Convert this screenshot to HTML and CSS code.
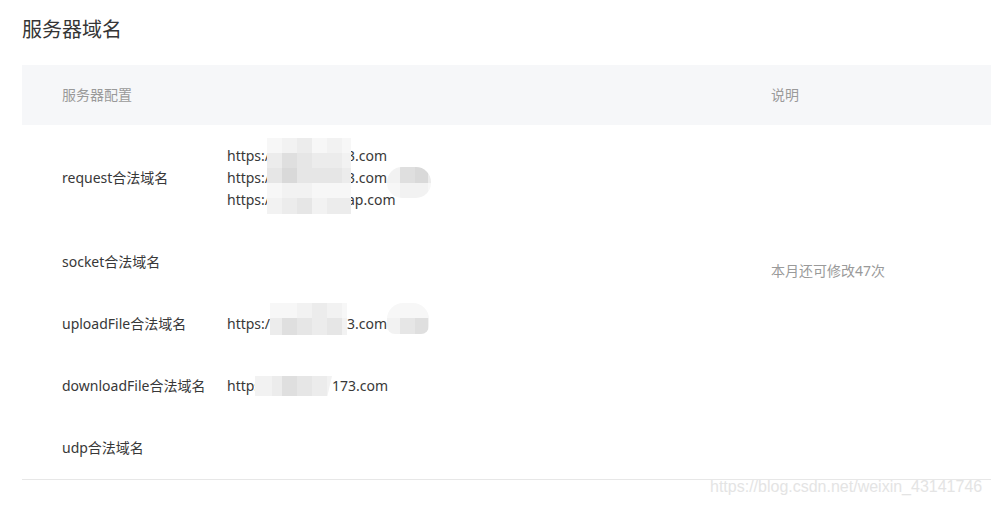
FILE: index.html
```html
<!DOCTYPE html>
<html lang="zh-CN">
<head>
<meta charset="utf-8">
<title>服务器域名</title>
<link rel="stylesheet" href="styles.css">
</head>
<body>
<div class="page">
  <h2 class="title">服务器域名</h2>
  <div class="table">
    <div class="thead">
      <div class="th th-main">服务器配置</div>
      <div class="th th-desc">说明</div>
    </div>
    <div class="tbody">
      <div class="cell label r1">request合法域名</div>
      <div class="cell urls r1">
        <div class="line"><span class="pre">https:/</span><span>3.com</span></div>
        <div class="line"><span class="pre">https:/</span><span>3.com</span></div>
        <div class="line"><span class="pre">https:/</span><span>ap.com</span></div>
        <div class="mosaic mz-req">
          <i class="a"></i><i class="b"></i><i class="c"></i><i class="a"></i><i class="b"></i><i class="a"></i>
          <i class="c"></i><i class="e"></i><i class="d"></i><i class="c"></i><i class="c"></i><i class="b"></i>
          <i class="d"></i><i class="f"></i><i class="d"></i><i class="d"></i><i class="d"></i><i class="c"></i>
          <i class="a"></i><i class="b"></i><i class="b"></i><i class="a"></i><i class="a"></i><i class="a"></i>
          <i class="b"></i><i class="c"></i><i class="d"></i><i class="b"></i><i class="c"></i><i class="c"></i>
        </div>
        <div class="mosaic mz-req-s">
          <i class="b"></i><i class="e"></i><i class="f"></i><i class="c"></i>
          <i class="a"></i><i class="b"></i><i class="b"></i><i class="a"></i>
        </div>
      </div>

      <div class="cell label r2">socket合法域名</div>
      <div class="cell urls r2"></div>

      <div class="cell label r3">uploadFile合法域名</div>
      <div class="cell urls r3">
        <div class="line"><span class="pre">https:/</span><span>3.com</span></div>
        <div class="mosaic mz-up">
          <i class="a"></i><i class="a"></i><i class="b"></i><i class="c"></i><i class="b"></i><i class="a"></i>
          <i class="c"></i><i class="e"></i><i class="d"></i><i class="c"></i><i class="d"></i><i class="b"></i>
        </div>
        <div class="mosaic mz-up-s">
          <i class="a"></i><i class="a"></i><i class="a"></i><i class="a"></i>
          <i class="b"></i><i class="d"></i><i class="e"></i><i class="b"></i>
        </div>
      </div>

      <div class="cell label r4">downloadFile合法域名</div>
      <div class="cell urls r4">
        <div class="line"><span class="pre pre-dl">https:/</span><span>173.com</span></div>
        <div class="mosaic mz-dl">
          <i class="b"></i><i class="c"></i><i class="e"></i><i class="d"></i><i class="c"></i><i class="b"></i>
        </div>
      </div>

      <div class="cell label r5">udp合法域名</div>
      <div class="cell urls r5"></div>

      <div class="cell desc">本月还可修改47次</div>
    </div>
  </div>
</div>
<div class="watermark">https://blog.csdn.net/weixin_43141746</div>
</body>
</html>
```
FILE: styles.css
```css
html, body {
  margin: 0;
  padding: 0;
  background: #ffffff;
}

body {
  width: 991px;
  height: 505px;
  overflow: hidden;
  position: relative;
  font-family: "Noto Sans", "Noto Sans CJK SC", sans-serif;
  color: #383838;
}

.page {
  padding: 15px 0 0 22px;
}

.title {
  margin: 0 0 20px 0;
  font-size: 20px;
  line-height: 30px;
  font-weight: normal;
  color: #353535;
}

.table {
  font-size: 14px;
}

.thead {
  display: grid;
  grid-template-columns: 749px 1fr;
  height: 60px;
  line-height: 20px;
  align-items: center;
  background: #f6f7f9;
  color: #9a9a9a;
}

.th {
  padding-bottom: 1px;
}

.th-main {
  padding-left: 40px;
}

.tbody {
  display: grid;
  grid-template-columns: 205px 544px 1fr;
  border-bottom: 1px solid #e7e7e7;
  line-height: 22px;
}

.cell {
  padding: 20px 0;
}

.label {
  grid-column: 1;
  padding-left: 40px;
  align-self: center;
  white-space: nowrap;
}

.urls {
  grid-column: 2;
  position: relative;
  min-height: 22px;
}

.r1 { grid-row: 1; }
.r2 { grid-row: 2; }
.r3 { grid-row: 3; }
.r4 { grid-row: 4; }
.r5 { grid-row: 5; }

.desc {
  grid-column: 3;
  grid-row: 1 / 5;
  align-self: center;
  color: #9a9a9a;
}

.line {
  display: flex;
  height: 22px;
  white-space: nowrap;
}

.pre {
  display: inline-block;
  width: 120px;
  overflow: hidden;
}

.pre-dl {
  width: 105px;
}

/* pixelated redaction blocks over the hidden parts of the urls */
.mosaic {
  position: absolute;
  display: grid;
}

.mosaic i {
  display: block;
}

.mosaic .a { background: #f7f7f7; }
.mosaic .b { background: #f2f2f2; }
.mosaic .c { background: #ececec; }
.mosaic .d { background: #e6e6e6; }
.mosaic .e { background: #dfdfdf; }
.mosaic .f { background: #d9d9d9; }

.mz-req {
  left: 40px;
  top: 13px;
  grid-template-columns: 15px 15px 15px 15px 15px 9px;
  grid-template-rows: 15px 15px 15px 15px 16px;
}

.mz-req-s {
  left: 160px;
  top: 42px;
  grid-template-columns: 13px 15px 13px 3px;
  grid-template-rows: 16px 15px;
  border-radius: 15px;
  overflow: hidden;
}

.mz-up {
  left: 43px;
  top: 10px;
  grid-template-columns: 12px 15px 15px 15px 15px 5px;
  grid-template-rows: 15px 17px;
}

.mz-up-s {
  left: 160px;
  top: 10px;
  grid-template-columns: 13px 15px 13px 1px;
  grid-template-rows: 15px 16px;
  border-radius: 16px 16px 8px 8px;
  overflow: hidden;
}

.mz-dl {
  left: 28px;
  top: 21px;
  grid-template-columns: 17px 10px 15px 15px 15px 5px;
  grid-template-rows: 20px;
  clip-path: polygon(0 0, 100% 0, 94% 100%, 0 100%);
}

.watermark {
  position: absolute;
  left: 710px;
  top: 478px;
  font-family: "Liberation Sans", Arial, sans-serif;
  font-size: 16px;
  line-height: 18px;
  color: #e4e4e4;
  white-space: nowrap;
}
```
